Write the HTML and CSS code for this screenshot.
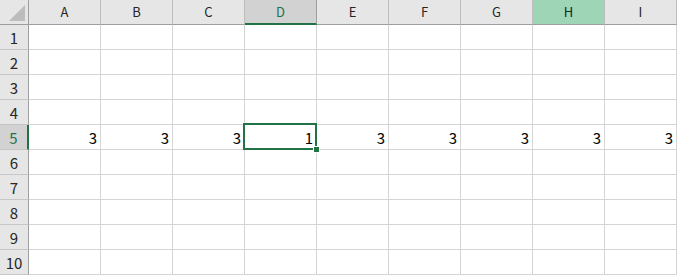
FILE: index.html
```html
<!DOCTYPE html>
<html lang="ja">
<head>
<meta charset="utf-8">
<title>Sheet</title>
<link rel="stylesheet" href="styles.css">
</head>
<body>
<div class="sheet">
  <div class="corner"><svg width="29" height="25" viewBox="0 0 29 25"><polygon points="25,5 25,21 9,21" fill="#bcbcbc"/></svg></div>
  <div class="ch">A</div><div class="ch">B</div><div class="ch">C</div><div class="ch ch-sel">D</div><div class="ch">E</div><div class="ch">F</div><div class="ch">G</div><div class="ch ch-hl">H</div><div class="ch">I</div>

  <div class="rh">1</div><div class="c"></div><div class="c"></div><div class="c"></div><div class="c"></div><div class="c"></div><div class="c"></div><div class="c"></div><div class="c"></div><div class="c"></div>
  <div class="rh">2</div><div class="c"></div><div class="c"></div><div class="c"></div><div class="c"></div><div class="c"></div><div class="c"></div><div class="c"></div><div class="c"></div><div class="c"></div>
  <div class="rh">3</div><div class="c"></div><div class="c"></div><div class="c"></div><div class="c"></div><div class="c"></div><div class="c"></div><div class="c"></div><div class="c"></div><div class="c"></div>
  <div class="rh">4</div><div class="c"></div><div class="c"></div><div class="c"></div><div class="c"></div><div class="c"></div><div class="c"></div><div class="c"></div><div class="c"></div><div class="c"></div>
  <div class="rh rh-sel">5</div><div class="c">3</div><div class="c">3</div><div class="c">3</div><div class="c active">1<span class="handle"></span></div><div class="c">3</div><div class="c">3</div><div class="c">3</div><div class="c">3</div><div class="c">3</div>
  <div class="rh">6</div><div class="c"></div><div class="c"></div><div class="c"></div><div class="c"></div><div class="c"></div><div class="c"></div><div class="c"></div><div class="c"></div><div class="c"></div>
  <div class="rh">7</div><div class="c"></div><div class="c"></div><div class="c"></div><div class="c"></div><div class="c"></div><div class="c"></div><div class="c"></div><div class="c"></div><div class="c"></div>
  <div class="rh">8</div><div class="c"></div><div class="c"></div><div class="c"></div><div class="c"></div><div class="c"></div><div class="c"></div><div class="c"></div><div class="c"></div><div class="c"></div>
  <div class="rh">9</div><div class="c"></div><div class="c"></div><div class="c"></div><div class="c"></div><div class="c"></div><div class="c"></div><div class="c"></div><div class="c"></div><div class="c"></div>
  <div class="rh">10</div><div class="c"></div><div class="c"></div><div class="c"></div><div class="c"></div><div class="c"></div><div class="c"></div><div class="c"></div><div class="c"></div><div class="c"></div>
</div>
</body>
</html>
```
FILE: styles.css
```css
html, body {
  margin: 0;
  padding: 0;
  background: #ffffff;
}

.sheet {
  display: grid;
  grid-template-columns: 29px repeat(9, 72px);
  grid-template-rows: 25px repeat(10, 25px);
  font-family: "Noto Sans CJK JP", "Noto Sans", sans-serif;
  color: #000;
}

.sheet > div {
  box-sizing: border-box;
}

.corner {
  background: #e6e6e6;
  border-right: 1px solid #9e9e9e;
  border-bottom: 1px solid #9e9e9e;
  overflow: hidden;
}

.corner svg {
  display: block;
}

.ch {
  background: #e6e6e6;
  border-right: 1px solid #bdbdbd;
  border-bottom: 1px solid #9e9e9e;
  display: flex;
  align-items: center;
  justify-content: center;
  font-size: 13px;
  color: #262626;
  padding-bottom: 1px;
}

.ch-sel {
  background: #d2d2d2;
  color: #217346;
  border-bottom: 2px solid #217346;
  border-right-color: #9e9e9e;
}

.ch-hl {
  background: #9fd5b7;
  color: #0d2a1a;
}

.rh {
  background: #e6e6e6;
  border-right: 1px solid #9e9e9e;
  border-bottom: 1px solid #c6c6c6;
  display: flex;
  align-items: center;
  justify-content: center;
  font-size: 15px;
  color: #262626;
}

.rh-sel {
  background: #d2d2d2;
  color: #217346;
  border-right: 2px solid #217346;
}

.c {
  border-right: 1px solid #d4d4d4;
  border-bottom: 1px solid #d4d4d4;
  display: flex;
  align-items: center;
  justify-content: flex-end;
  padding-right: 3px;
  font-size: 15px;
}

.active {
  position: relative;
}

.active::after {
  content: "";
  position: absolute;
  top: -2px;
  left: -2px;
  right: -1px;
  bottom: -1px;
  border: 2px solid #217346;
}

.handle {
  position: absolute;
  right: -4px;
  bottom: -4px;
  width: 5px;
  height: 5px;
  background: #217346;
  border: 1px solid #ffffff;
  z-index: 2;
}
```
